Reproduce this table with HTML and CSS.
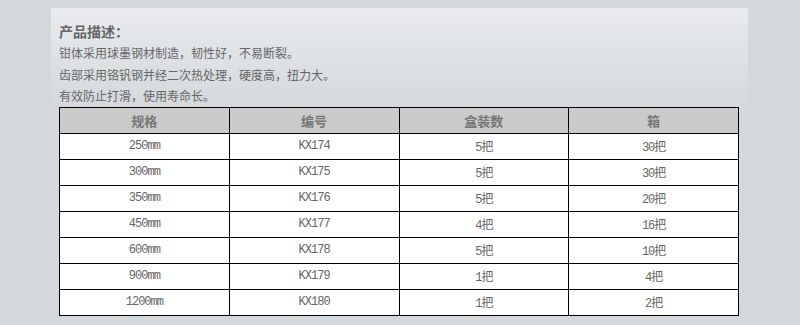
FILE: index.html
```html
<!DOCTYPE html>
<html lang="zh">
<head>
<meta charset="utf-8">
<title>产品描述</title>
<link rel="stylesheet" href="styles.css">
</head>
<body>
<div class="panel">
  <h2 class="title">产品描述：</h2>
  <p class="line">钳体采用球墨钢材制造，韧性好，不易断裂。</p>
  <p class="line">齿部采用铬钒钢并经二次热处理，硬度高，扭力大。</p>
  <p class="line">有效防止打滑，使用寿命长。</p>
  <table class="spec">
    <thead>
      <tr><th>规格</th><th>编号</th><th>盒装数</th><th>箱</th></tr>
    </thead>
    <tbody>
      <tr><td>250mm</td><td>KX174</td><td>5把</td><td>30把</td></tr>
      <tr><td>300mm</td><td>KX175</td><td>5把</td><td>30把</td></tr>
      <tr><td>350mm</td><td>KX176</td><td>5把</td><td>20把</td></tr>
      <tr><td>450mm</td><td>KX177</td><td>4把</td><td>16把</td></tr>
      <tr><td>600mm</td><td>KX178</td><td>5把</td><td>10把</td></tr>
      <tr><td>900mm</td><td>KX179</td><td>1把</td><td>4把</td></tr>
      <tr><td>1200mm</td><td>KX180</td><td>1把</td><td>2把</td></tr>
    </tbody>
  </table>
</div>
</body>
</html>
```

FILE: styles.css
```css
html, body {
  margin: 0;
  padding: 0;
  background: #d4d8db;
}

body {
  font-family: "Noto Sans CJK SC", "Liberation Sans", sans-serif;
  color: #666;
}

.panel {
  margin: 8px 0 0 51px;
  width: 681px;
  padding: 12px 8px 0 8px;
  background: linear-gradient(to bottom, #e9ebee 0px, #d5d9dc 97px, #d4d8db 100%);
  background-repeat: no-repeat;
}

.title {
  margin: 0;
  font-size: 14px;
  line-height: 22px;
  font-weight: bold;
  color: #666;
}

.line {
  margin: 0;
  font-size: 12px;
  line-height: 21.5px;
  color: #666;
}

.spec {
  width: 680px;
  border-collapse: collapse;
  table-layout: fixed;
  background: #fff;
}

.spec th,
.spec td {
  border: 1px solid #000;
  height: 25px;
  padding: 0;
  text-align: center;
  vertical-align: middle;
}

.spec th {
  background: #cacaca;
  font-size: 13px;
  font-weight: bold;
  color: #777;
}

.spec td {
  font-family: "Liberation Mono", "Noto Sans CJK SC", monospace;
  font-size: 12px;
  letter-spacing: -1px;
  color: #666;
}
```
